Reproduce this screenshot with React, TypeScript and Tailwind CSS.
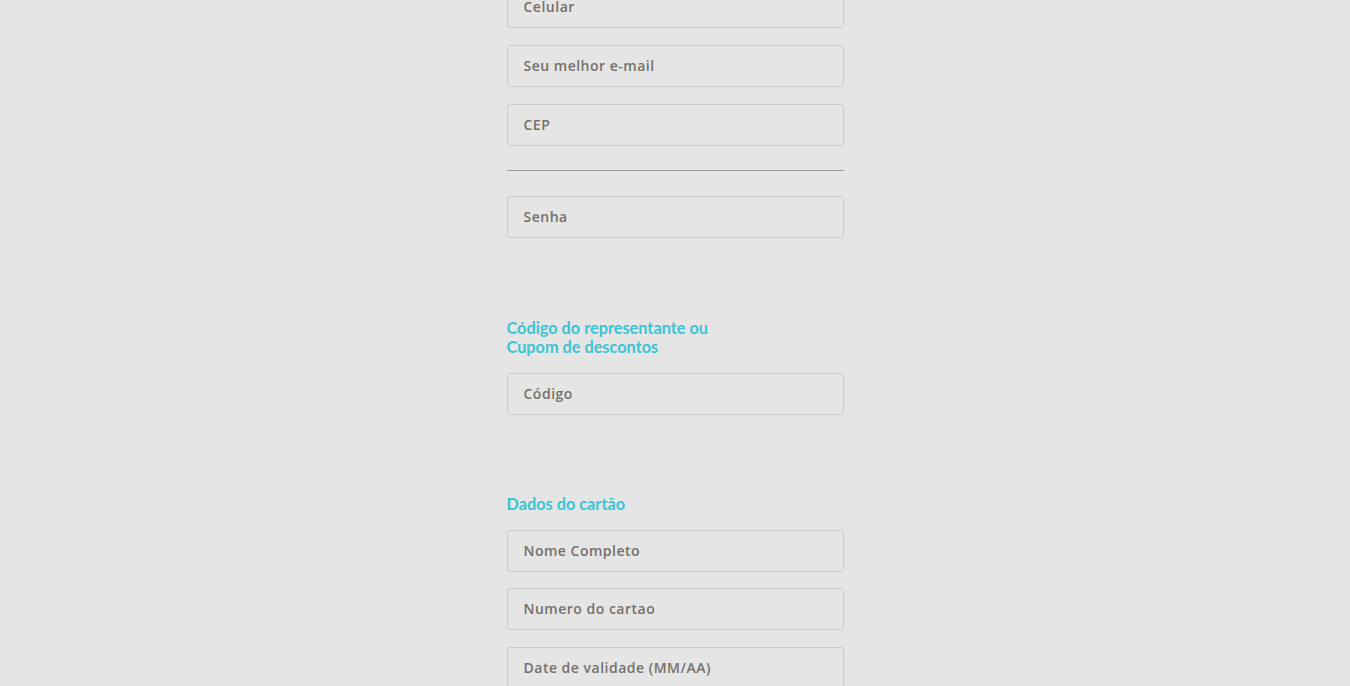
import React from "react";

const font = { fontFamily: '"Open Sans", "Noto Sans", sans-serif' };
const headFont = { fontFamily: 'Lato, "Open Sans", sans-serif' };

function Field({ placeholder, className = "" }: { placeholder: string; className?: string }) {
  return (
    <input
      type="text"
      placeholder={placeholder}
      className={`block w-full h-[42px] rounded-[3px] border border-[#cacaca] bg-[#e5e5e5] pl-4 pb-[2px] text-[14px] font-semibold tracking-[0.5px] text-[#6f6a66] placeholder:text-[#75706b] outline-none ${className}`}
    />
  );
}

export default function App() {
  return (
    <div className="min-h-screen bg-[#e5e5e5] overflow-hidden" style={font}>
      <form className="mx-auto w-[337px] -mt-[14px] pb-10" onSubmit={(e) => e.preventDefault()}>
        <Field placeholder="Celular" className="mb-[17px]" />
        <Field placeholder="Seu melhor e-mail" className="mb-[17px]" />
        <Field placeholder="CEP" />
        <hr className="mt-[24px] mb-[25px] border-0 border-t border-[#9a9a9a]" />
        <Field placeholder="Senha" />

        <h3 className="mt-[80px] mb-[17px] text-[16.3px] leading-[19px] font-bold text-[#3bc4d5]" style={headFont}>
          Código do representante ou
          <br />
          Cupom de descontos
        </h3>
        <Field placeholder="Código" />

        <h3 className="mt-[79px] mb-[17px] text-[16.3px] leading-[19px] font-bold text-[#3bc4d5]" style={headFont}>
          Dados do cartão
        </h3>
        <Field placeholder="Nome Completo" className="mb-[16px]" />
        <Field placeholder="Numero do cartao" className="mb-[17px]" />
        <Field placeholder="Date de validade (MM/AA)" />
      </form>
    </div>
  );
}
